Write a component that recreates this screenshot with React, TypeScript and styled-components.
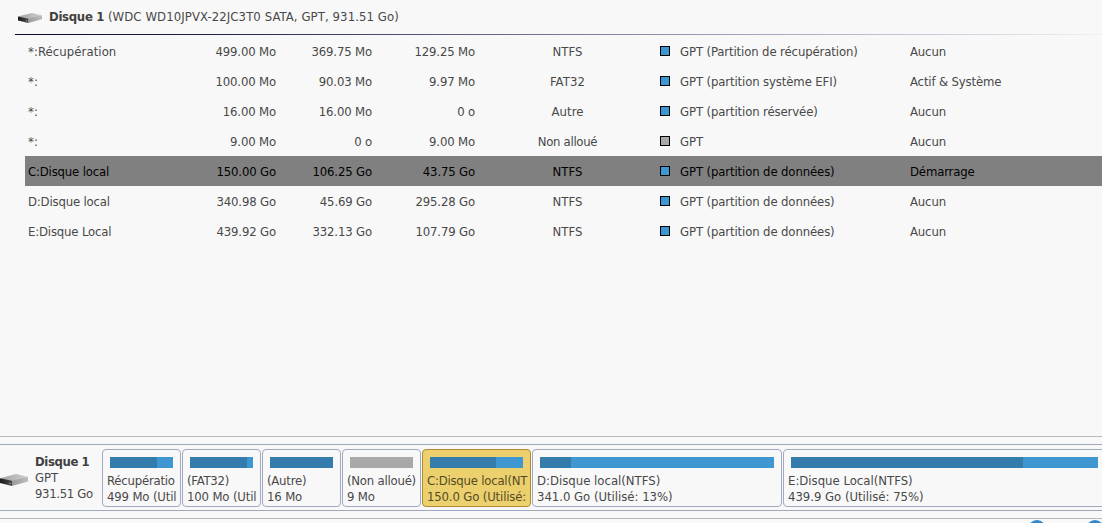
import React from 'react';
import styled, { createGlobalStyle } from 'styled-components';

const GlobalStyle = createGlobalStyle`
  * { box-sizing: border-box; }
  html, body { margin: 0; background: #f8f8f8; overflow: hidden; }
  body {
    font-family: "DejaVu Sans Condensed", "DejaVu Sans", Tahoma, sans-serif;
    font-stretch: condensed;
    font-size: 13px;
    line-height: 16px;
    color: #484848;
  }
`;

const Window = styled.main`
  display: flex;
  flex-direction: column;
  width: 1102px;
  height: 523px;
  overflow: hidden;
`;

const Text = styled.span<{ $ls?: number }>`
  white-space: pre;
  letter-spacing: ${p => p.$ls ?? -0.1}px;
`;

const Bold = styled(Text)`
  font-weight: 700;
  color: #404040;
`;

const DiskHeader = styled.header`
  display: flex;
  align-items: center;
  height: 34px;
  padding: 0 0 1px 18px;
  & > svg { margin: 3px 7px 0 0; }
`;

const HeaderRule = styled.div`
  height: 1px;
  margin-left: 15px;
  background: linear-gradient(90deg, #050b28 0%, #1c2348 18%, #8f93ac 60%, #f0f0f6 100%);
`;

const Table = styled.section`
  height: 401px;
  padding: 1px 0 0 25px;
`;

const Row = styled.div<{ $selected?: boolean }>`
  display: grid;
  grid-template-columns: 148px 100px 96px 103px 185px 20px 230px 1fr;
  align-items: center;
  height: 30px;
  padding-left: 3px;
  color: ${p => (p.$selected ? '#000' : '#484848')};
  background: ${p => (p.$selected ? '#808080' : 'transparent')};
`;

const Cell = styled.div<{ $align?: 'right' | 'center' }>`
  text-align: ${p => p.$align ?? 'left'};
  height: 18px;
  padding-top: 2px;
`;

const Swatch = styled.i<{ $free?: boolean }>`
  width: 10px;
  height: 10px;
  border: 1px solid #000;
  background: ${p => (p.$free ? '#a9a9a9' : '#3e97d1')};
`;

const MapArea = styled.section`
  height: 83px;
  padding-top: 7px;
  border-top: 1px solid #b9b9b9;
  border-bottom: 1px solid #b9b9b9;
`;

const MapPanel = styled.div`
  display: flex;
  height: 67px;
  width: 1110px;
  padding: 4px 0 0;
  border-top: 1px solid #a0a8bd;
  border-bottom: 1px solid #a0a8bd;
`;

const DiskInfo = styled.div`
  display: flex;
  flex: none;
  width: 102px;
  & > svg { flex: none; margin-top: 25px; }
`;

const Lines = styled.div`
  display: flex;
  flex-direction: column;
`;

const InfoLines = styled(Lines)`
  padding: 5px 0 0 7px;
`;

const Partition = styled.div<{ $w: number; $selected?: boolean }>`
  flex: none;
  width: ${p => p.$w}px;
  height: 58px;
  margin-right: 1px;
  padding: 7px 3px 0 4px;
  border: 1px solid ${p => (p.$selected ? '#b38a30' : '#a0abc2')};
  border-radius: 4px;
  background: ${p => (p.$selected ? '#ebd06d' : '#f8f8f8')};
  color: ${p => (p.$selected ? '#554b24' : '#484848')};
`;

const Bar = styled.div<{ $w: number; $free?: boolean }>`
  width: ${p => p.$w}px;
  height: 11px;
  margin: 0 0 5px 3px;
  background: ${p => (p.$free ? '#a9a9a9' : '#3e97d1')};
`;

const Used = styled.div`
  height: 11px;
  background: #347cac;
`;

const Footer = styled.footer`
  display: flex;
  gap: 40px;
  height: 4px;
  padding: 1px 0 0 1028px;
  overflow: hidden;
`;

const RoundButton = styled.i`
  flex: none;
  width: 18px;
  height: 18px;
  border-radius: 50%;
  background: #3288c8;
`;

const DriveIcon = ({ width, height }: { width: number; height: number }) => (
  <svg width={width} height={height} viewBox="0 0 28 12" preserveAspectRatio="none">
    <defs>
      <linearGradient id="driveTop" x1="0" x2="1">
        <stop offset="0" stopColor="#a0a0a0" />
        <stop offset="1" stopColor="#d2d2d2" />
      </linearGradient>
      <linearGradient id="driveSide" x1="0" x2="1">
        <stop offset="0" stopColor="#9a9a9a" />
        <stop offset="1" stopColor="#bdbdbd" />
      </linearGradient>
      <linearGradient id="driveFront" x1="0" x2="1">
        <stop offset="0" stopColor="#1c1c1c" />
        <stop offset="1" stopColor="#4a4a4a" />
      </linearGradient>
    </defs>
    <path d="M0 4.3 16 0 28 2.8 12 8z" fill="url(#driveTop)" />
    <path d="M12 6.8 28 2.8V7.4L12 12z" fill="url(#driveSide)" />
    <path d="M0 4.3 12 6.8V12L0 9z" fill="url(#driveFront)" />
    <path d="M9.2 9.3 10.4 9.6" stroke="#9ed49a" strokeWidth="1" />
  </svg>
);

interface RowData {
  name: string;
  size: string;
  used: string;
  free: string;
  fs: string;
  type: string;
  status: string;
  unallocated?: boolean;
  selected?: boolean;
}

const rows: RowData[] = [
  { name: '*:Récupération', size: '499.00 Mo', used: '369.75 Mo', free: '129.25 Mo', fs: 'NTFS', type: 'GPT (Partition de récupération)', status: 'Aucun' },
  { name: '*:', size: '100.00 Mo', used: '90.03 Mo', free: '9.97 Mo', fs: 'FAT32', type: 'GPT (partition système EFI)', status: 'Actif & Système' },
  { name: '*:', size: '16.00 Mo', used: '16.00 Mo', free: '0 o', fs: 'Autre', type: 'GPT (partition réservée)', status: 'Aucun' },
  { name: '*:', size: '9.00 Mo', used: '0 o', free: '9.00 Mo', fs: 'Non alloué', type: 'GPT', status: 'Aucun', unallocated: true },
  { name: 'C:Disque local', size: '150.00 Go', used: '106.25 Go', free: '43.75 Go', fs: 'NTFS', type: 'GPT (partition de données)', status: 'Démarrage', selected: true },
  { name: 'D:Disque local', size: '340.98 Go', used: '45.69 Go', free: '295.28 Go', fs: 'NTFS', type: 'GPT (partition de données)', status: 'Aucun' },
  { name: 'E:Disque Local', size: '439.92 Go', used: '332.13 Go', free: '107.79 Go', fs: 'NTFS', type: 'GPT (partition de données)', status: 'Aucun' },
];

interface PartitionData {
  title: string;
  detail: string;
  width: number;
  bar: number;
  used: number;
  unallocated?: boolean;
  selected?: boolean;
}

const partitions: PartitionData[] = [
  { title: 'Récupératio', detail: '499 Mo (Util', width: 79, bar: 63, used: 47 },
  { title: '(FAT32)', detail: '100 Mo (Util', width: 79, bar: 63, used: 57 },
  { title: '(Autre)', detail: '16 Mo', width: 79, bar: 63, used: 63 },
  { title: '(Non alloué)', detail: '9 Mo', width: 79, bar: 63, used: 0, unallocated: true },
  { title: 'C:Disque local(NT', detail: '150.0 Go (Utilisé:', width: 109, bar: 93, used: 66, selected: true },
  { title: 'D:Disque local(NTFS)', detail: '341.0 Go (Utilisé: 13%)', width: 250, bar: 234, used: 31 },
  { title: 'E:Disque Local(NTFS)', detail: '439.9 Go (Utilisé: 75%)', width: 323, bar: 307, used: 232 },
];

export default function App() {
  return (
    <Window>
      <GlobalStyle />
      <DiskHeader>
        <DriveIcon width={24} height={10} />
        <Bold $ls={-0.3}>Disque 1</Bold>
        <Text $ls={0.09}> (WDC WD10JPVX-22JC3T0 SATA, GPT, 931.51 Go)</Text>
      </DiskHeader>
      <HeaderRule />
      <Table>
        {rows.map((r, i) => (
          <Row key={i} $selected={r.selected}>
            <Cell><Text $ls={r.name.startsWith('*') ? 0.07 : -0.17}>{r.name}</Text></Cell>
            <Cell $align="right"><Text $ls={-0.15}>{r.size}</Text></Cell>
            <Cell $align="right"><Text $ls={-0.15}>{r.used}</Text></Cell>
            <Cell $align="right"><Text $ls={-0.15}>{r.free}</Text></Cell>
            <Cell $align="center"><Text $ls={r.unallocated ? -0.3 : 0.1}>{r.fs}</Text></Cell>
            <Swatch $free={r.unallocated} />
            <Cell><Text $ls={-0.12}>{r.type}</Text></Cell>
            <Cell><Text $ls={-0.15}>{r.status}</Text></Cell>
          </Row>
        ))}
      </Table>
      <MapArea>
        <MapPanel>
          <DiskInfo>
            <DriveIcon width={28} height={12} />
            <InfoLines>
              <Bold $ls={-0.4}>Disque 1</Bold>
              <Text>GPT</Text>
              <Text $ls={-0.35}>931.51 Go</Text>
            </InfoLines>
          </DiskInfo>
          {partitions.map(p => (
            <Partition key={p.title} $w={p.width} $selected={p.selected}>
              <Bar $w={p.bar} $free={p.unallocated}>
                <Used style={{ width: p.used }} />
              </Bar>
              <Lines>
                <Text $ls={p.bar < 100 ? -0.22 : 0}>{p.title}</Text>
                <Text $ls={p.bar < 100 ? -0.15 : -0.02}>{p.detail}</Text>
              </Lines>
            </Partition>
          ))}
        </MapPanel>
      </MapArea>
      <Footer>
        <RoundButton />
        <RoundButton />
      </Footer>
    </Window>
  );
}
